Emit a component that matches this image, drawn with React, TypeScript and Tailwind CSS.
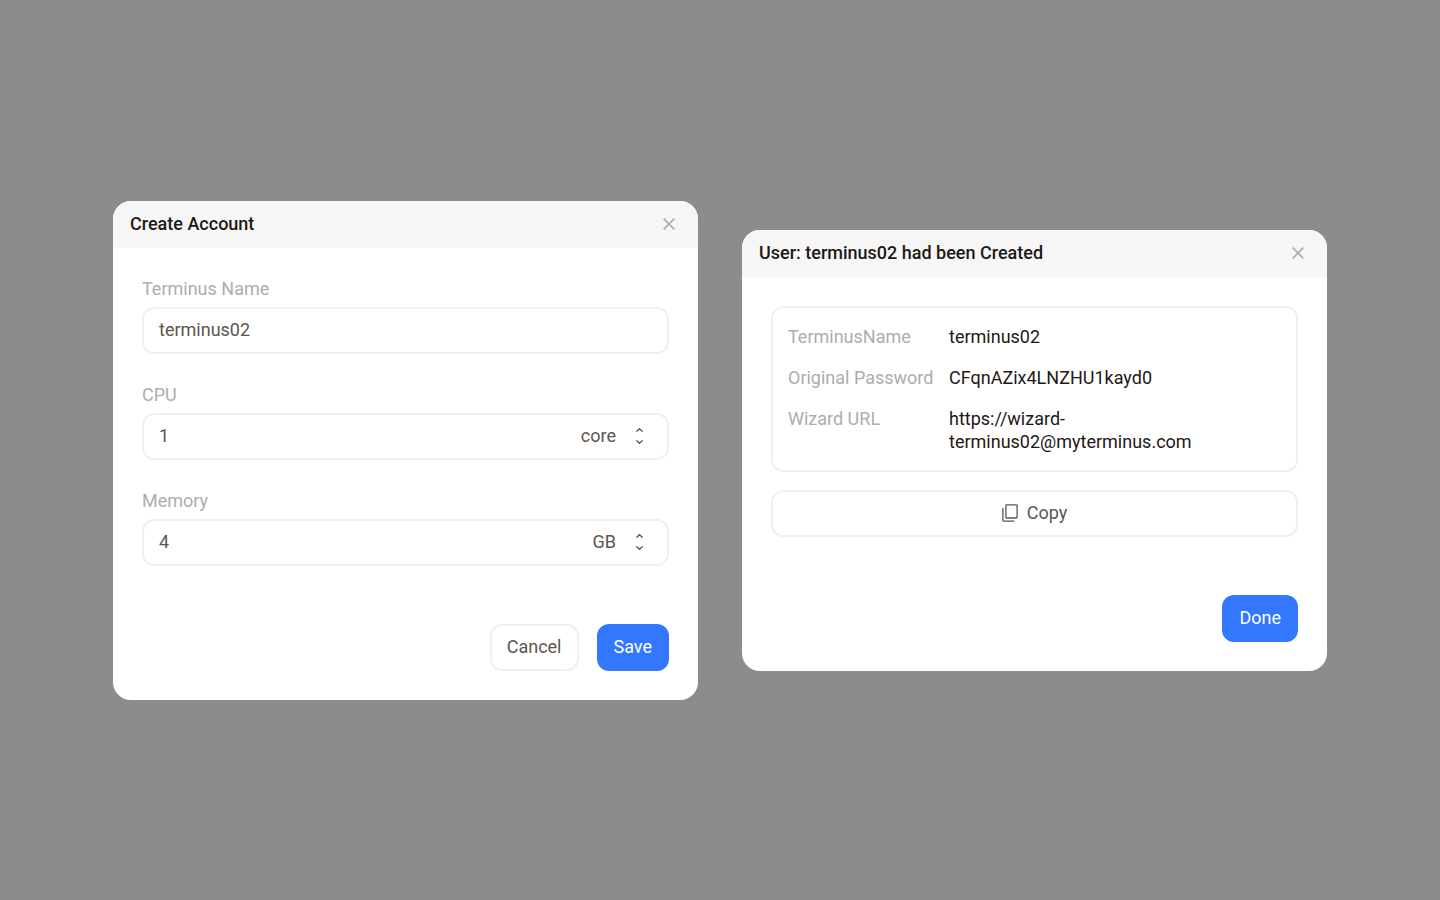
import { useState, type ReactNode } from "react";

function CloseIcon() {
  return (
    <svg className="size-3" viewBox="0 0 12 12" fill="none" stroke="#adadad" strokeWidth="1.7" aria-hidden="true">
      <path d="M0.7 0.7L11.3 11.3M11.3 0.7L0.7 11.3" />
    </svg>
  );
}

function CopyIcon() {
  return (
    <svg className="h-[18px] w-4" viewBox="0 0 16 18" fill="none" stroke="#5c5551" strokeWidth="1.3" aria-hidden="true">
      <rect x="3.9" y="0.8" width="11.2" height="13.2" rx="0.8" />
      <path d="M0.9 3.9V16.2Q0.9 17.1 1.8 17.1H12.2" />
    </svg>
  );
}

function Dialog({ title, children }: { title: string; children: ReactNode }) {
  return (
    <section role="dialog" aria-label={title} className="w-full max-w-[585px] overflow-hidden rounded-[18px] bg-white">
      <header className="flex h-[47px] items-center justify-between bg-[#f6f6f6] pr-[23px] pl-[17px]">
        <h2 className="text-[18px] leading-6 font-medium text-[#1f1814]">{title}</h2>
        <button type="button" aria-label="Close">
          <CloseIcon />
        </button>
      </header>
      {children}
    </section>
  );
}

function Field({ id, label, initial, unit }: { id: string; label: string; initial: string; unit?: string }) {
  const [value, setValue] = useState(initial);
  const step = (by: number) => setValue(String(Math.max(1, Number(value) + by)));
  return (
    <div className="flex flex-col gap-1.5">
      <label htmlFor={id} className="text-[18px] leading-6 text-[#adadad]">
        {label}
      </label>
      <div className="flex h-[47px] items-center rounded-xl border-2 border-[#f0f0f0] pr-6 pl-[15px]">
        <input
          id={id}
          value={value}
          onChange={(e) => setValue(e.target.value)}
          className="min-w-0 flex-1 bg-transparent text-[18px] leading-6 text-[#5c5551] outline-none"
        />
        {unit && (
          <>
            <span className="text-[18px] leading-6 text-[#5c5551]">{unit}</span>
            <span className="ml-5 flex flex-col gap-2">
              <button type="button" aria-label={`Increase ${label}`} onClick={() => step(1)}>
                <svg className="h-1 w-[7px]" viewBox="0 0 7 4" fill="none" stroke="#5c5551" strokeWidth="1.3" aria-hidden="true">
                  <path d="M0.4 3.6L3.5 0.7L6.6 3.6" />
                </svg>
              </button>
              <button type="button" aria-label={`Decrease ${label}`} onClick={() => step(-1)}>
                <svg className="h-1 w-[7px]" viewBox="0 0 7 4" fill="none" stroke="#5c5551" strokeWidth="1.3" aria-hidden="true">
                  <path d="M0.4 0.4L3.5 3.3L6.6 0.4" />
                </svg>
              </button>
            </span>
          </>
        )}
      </div>
    </div>
  );
}

function CreateAccount() {
  return (
    <Dialog title="Create Account">
      <form className="px-[29px] pt-[29px] pb-[29px]" onSubmit={(e) => e.preventDefault()}>
        <div className="flex flex-col gap-[29px]">
          <Field id="terminus-name" label="Terminus Name" initial="terminus02" />
          <Field id="cpu" label="CPU" initial="1" unit="core" />
          <Field id="memory" label="Memory" initial="4" unit="GB" />
        </div>
        <div className="mt-[58px] flex justify-end gap-[18px]">
          <button type="button" className="h-[47px] rounded-xl border-2 border-[#f0f0f0] px-[15px] text-[18px] leading-6 text-[#5c5551]">
            Cancel
          </button>
          <button type="submit" className="h-[47px] rounded-xl bg-[#3377ff] px-[17px] text-[18px] leading-6 text-white">
            Save
          </button>
        </div>
      </form>
    </Dialog>
  );
}

const details = [
  ["TerminusName", "terminus02"],
  ["Original Password", "CFqnAZix4LNZHU1kayd0"],
  ["Wizard URL", "https://wizard-terminus02@myterminus.com"],
];

function AccountCreated() {
  return (
    <Dialog title="User: terminus02 had been Created">
      <div className="px-[29px] pt-[29px] pb-[29px]">
        <dl className="flex flex-col gap-[18px] rounded-xl border-2 border-[#f0f0f0] px-[15px] py-[17px] text-[18px] leading-[23px]">
          {details.map(([name, value]) => (
            <div key={name} className="flex">
              <dt className="w-[161px] shrink-0 text-[#adadad]">{name}</dt>
              <dd className="max-w-72 text-[#1f1814]">{value}</dd>
            </div>
          ))}
        </dl>
        <button
          type="button"
          className="mt-[18px] flex h-[47px] w-full items-center justify-center gap-[9px] rounded-xl border-2 border-[#f0f0f0] text-[18px] leading-6 text-[#5c5551]"
        >
          <CopyIcon />
          Copy
        </button>
        <div className="mt-[58px] flex justify-end">
          <button type="button" className="h-[47px] rounded-xl bg-[#3377ff] px-[17px] text-[18px] leading-6 text-white">
            Done
          </button>
        </div>
      </div>
    </Dialog>
  );
}

export default function App() {
  return (
    <main className="flex min-h-screen items-center justify-center gap-11 bg-[#8c8c8c] p-6 font-[Roboto,sans-serif]">
      <CreateAccount />
      <AccountCreated />
    </main>
  );
}
